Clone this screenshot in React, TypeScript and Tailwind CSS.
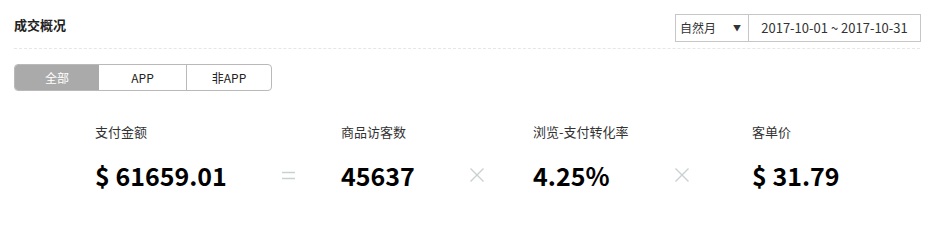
const font = "font-['Microsoft_YaHei','Noto_Sans_CJK_SC',sans-serif]";

function Times() {
  return (
    <svg width="16" height="16" viewBox="0 0 16 16" className="block">
      <path d="M1.5 1.5 L14.5 14.5 M14.5 1.5 L1.5 14.5" stroke="#c9d0d0" strokeWidth="1.4" fill="none" />
    </svg>
  );
}

function Equals() {
  return (
    <svg width="13" height="9" viewBox="0 0 13 9" className="block">
      <path d="M0 1.5 H13 M0 7.5 H13" stroke="#c9d0d0" strokeWidth="1.6" fill="none" />
    </svg>
  );
}

function Metric({ label, value, className }: { label: string; value: string; className: string }) {
  return (
    <div className={`flex flex-col ${className}`}>
      <span className="text-[13px] leading-[16px] text-[#333]">{label}</span>
      <span className="mt-[20px] text-[25px] leading-[30px] font-bold text-black">{value}</span>
    </div>
  );
}

function Op({ children }: { children: React.ReactNode }) {
  return <div className="w-[36px] h-[30px] mt-[36px] flex items-center justify-center">{children}</div>;
}

export default function App() {
  return (
    <div className={`w-[934px] h-[203px] bg-white ${font} overflow-hidden`}>
      <div className="px-[14px] pt-[14px]">
        <div className="flex justify-between items-start">
          <h2 className="text-[13px] leading-[16px] font-bold text-[#222] mt-[3px]">成交概况</h2>
          <div className="flex h-[28px] border border-[#c6c6c6] text-[12px] text-[#333] mr-[-1px]">
            <div className="w-[73px] flex items-center justify-between pl-[4px] pr-[7px] border-r border-[#c6c6c6]">
              <span>自然月</span>
              <span className="text-[8px]">▼</span>
            </div>
            <div className="w-[171px] flex items-center justify-center text-[13px]">2017-10-01 ~ 2017-10-31</div>
          </div>
        </div>
        <div className="mt-[6px] border-t border-dashed border-[#e6e6e6]" />
        <div className="mt-[15px] flex w-[258px] h-[27px] rounded-[4px] border border-[#b9b9b9] overflow-hidden text-[12px]">
          <div className="w-[84px] bg-[#aaaaaa] text-white flex items-center justify-center">全部</div>
          <div className="w-[88px] border-r border-[#b9b9b9] text-[#222] flex items-center justify-center">APP</div>
          <div className="flex-1 text-[#222] flex items-center justify-center">非APP</div>
        </div>
      </div>
      <div className="flex pl-[95px] pt-[33px]">
        <Metric label="支付金额" value="$ 61659.01" className="w-[175px]" />
        <Op><Equals /></Op>
        <Metric label="商品访客数" value="45637" className="ml-[35px] w-[118px]" />
        <Op><Times /></Op>
        <Metric label="浏览-支付转化率" value="4.25%" className="ml-[38px] w-[131px]" />
        <Op><Times /></Op>
        <Metric label="客单价" value="$ 31.79" className="ml-[52px]" />
      </div>
    </div>
  );
}
